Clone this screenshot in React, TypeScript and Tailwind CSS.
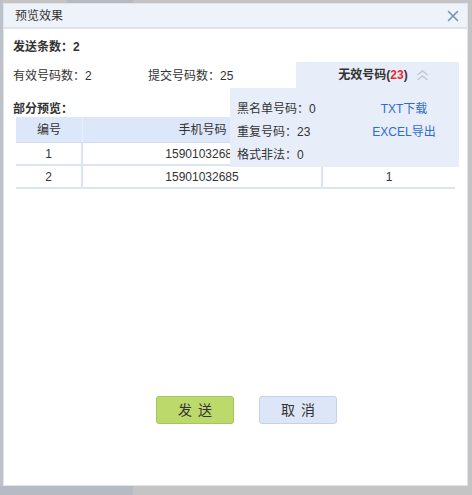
import React from "react";

const font = { fontFamily: '"Liberation Sans","Noto Sans CJK SC",sans-serif' };

export default function App() {
  return (
    <div className="w-[472px] h-[495px] bg-[#c4c4c4] relative overflow-hidden text-[12px] text-[#333]" style={font}>
      <div className="absolute left-0 top-0 w-[3px] h-[495px] bg-[#bdc1c8]" />
      <div className="absolute left-0 bottom-0 w-[133px] h-[9px] bg-[#b5bac3]" />
      <div className="absolute left-[67px] top-0 w-[66px] h-[3px] bg-[#b5bac3]" />
      <div className="absolute left-[3px] top-[3px] w-[465px] h-[483px] bg-white border border-[#dfe4ec] flex flex-col">
        {/* title bar */}
        <div className="h-[25px] bg-[#eef2f9] border-b-2 border-[#dde4ee] flex items-center justify-between pl-[11px] pr-[8px] shrink-0">
          <span className="text-[12px] text-[#333]">预览效果</span>
          <svg width="12" height="12" viewBox="0 0 12 12">
            <path d="M1.5 1.5 L10.5 10.5 M10.5 1.5 L1.5 10.5" stroke="#7492bc" strokeWidth="1.6" strokeLinecap="round" />
          </svg>
        </div>
        {/* body */}
        <div className="pl-[9px] pr-[8px] pt-[10px] flex flex-col">
          <div className="h-[16px] leading-[16px] font-bold">发送条数：2</div>
          <div className="mt-[7px] h-[26px] flex items-center relative z-10">
            <span className="w-[135px] pt-[2px]">有效号码数：2</span>
            <span className="pt-[2px]">提交号码数：25</span>
            <div className="ml-auto w-[163px] h-[26px] bg-[#e7eef9] relative flex items-center justify-center">
              <span className="font-bold pl-[12px]">
                无效号码(<span className="text-[#e8292b]">23</span>)
              </span>
              <svg className="ml-[8px]" width="13" height="11" viewBox="0 0 13 11">
                <path d="M1.5 5 L6.5 1 L11.5 5 M1.5 10 L6.5 6 L11.5 10" stroke="#c3c9d2" strokeWidth="1.6" fill="none" />
              </svg>
              <div className="absolute top-[26px] right-0 w-[229px] h-[79px] bg-[#e7eef9] flex pt-[10px]">
                <div className="w-[119px] pl-[7px] flex flex-col">
                  <div className="h-[23px] leading-[23px]">黑名单号码：0</div>
                  <div className="h-[23px] leading-[23px]">重复号码：23</div>
                  <div className="h-[23px] leading-[23px]">格式非法：0</div>
                </div>
                <div className="flex-1 flex flex-col items-center text-[#2f6bd0]">
                  <div className="h-[23px] leading-[23px]">TXT下载</div>
                  <div className="h-[23px] leading-[23px]">EXCEL导出</div>
                </div>
              </div>
            </div>
          </div>
          <div className="mt-[13px] h-[16px] leading-[16px] font-bold">部分预览：</div>
          <div className="ml-[3px] w-[439px] flex flex-col">
            <div className="flex h-[26px] bg-[#dce7f9] border-b border-[#d2ddef]">
              <div className="w-[67px] flex items-center justify-center border-r border-[#eaf0fb]">编号</div>
              <div className="w-[240px] flex items-center justify-center border-r border-[#eaf0fb]">手机号码</div>
              <div className="flex-1" />
            </div>
            {[
              ["1", "15901032685", "1"],
              ["2", "15901032685", "1"],
            ].map((r, i) => (
              <div key={i} className="flex h-[23px] border-b-2 border-[#dbe4f3]">
                <div className="w-[67px] flex items-center justify-center border-r-2 border-[#dbe4f3]">{r[0]}</div>
                <div className="w-[240px] flex items-center justify-center border-r-2 border-[#dbe4f3]">{r[1]}</div>
                <div className="flex-1 flex items-center justify-center">{r[2]}</div>
              </div>
            ))}
          </div>
        </div>
        <div className="mt-auto mb-[61px] flex justify-center pl-[22px] gap-[25px]">
          <button className="w-[78px] h-[28px] rounded-[3px] bg-[#bcd96c] border border-[#a5c65a] text-[14px] text-[#333] tracking-[6px] pl-[6px]">发送</button>
          <button className="w-[78px] h-[28px] rounded-[3px] bg-[#dce6f6] border border-[#c3d3ea] text-[14px] text-[#333] tracking-[6px] pl-[6px]">取消</button>
        </div>
      </div>
    </div>
  );
}
